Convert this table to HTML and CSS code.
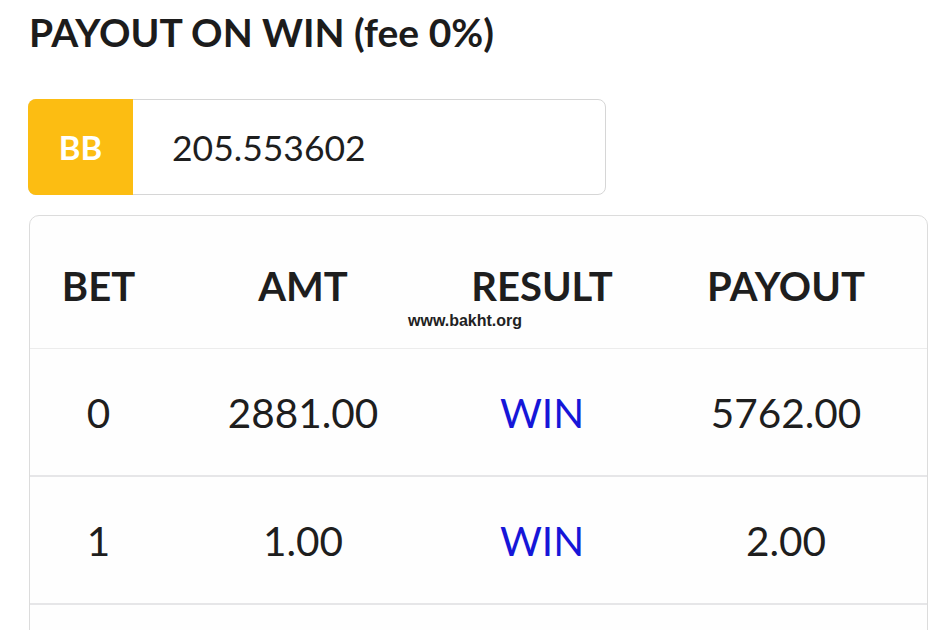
FILE: index.html
```html
<!DOCTYPE html>
<html>
<head>
<meta charset="utf-8">
<link rel="stylesheet" href="styles.css">
</head>
<body>
<div class="page">
  <h1 class="title">PAYOUT ON WIN (fee 0%)</h1>
  <div class="input-group">
    <div class="addon">BB</div>
    <div class="value">205.553602</div>
  </div>
  <div class="card">
    <div class="row head">
      <div class="cell">BET</div>
      <div class="cell">AMT</div>
      <div class="cell">RESULT</div>
      <div class="cell">PAYOUT</div>
      <div class="watermark">www.bakht.org</div>
    </div>
    <div class="row">
      <div class="cell">0</div>
      <div class="cell">2881.00</div>
      <div class="cell win">WIN</div>
      <div class="cell">5762.00</div>
    </div>
    <div class="row">
      <div class="cell">1</div>
      <div class="cell">1.00</div>
      <div class="cell win">WIN</div>
      <div class="cell">2.00</div>
    </div>
    <div class="row">
      <div class="cell"></div>
      <div class="cell"></div>
      <div class="cell"></div>
      <div class="cell"></div>
    </div>
  </div>
</div>
</body>
</html>
```
FILE: styles.css
```css
html, body {
  margin: 0;
  padding: 0;
  background: #ffffff;
  font-family: Lato, "Open Sans", sans-serif;
  color: #1e1e1e;
  overflow: hidden;
}
.page {
  padding: 10px 0 0 28px;
  width: 901px;
}
.title {
  margin: 0 0 0 1px;
  font-size: 39px;
  font-weight: 700;
  line-height: 44px;
  color: #1c1c1c;
}
.input-group {
  margin-top: 45px;
  width: 578px;
  height: 96px;
  display: flex;
  box-sizing: border-box;
  border: 1px solid #d6d6d6;
  border-radius: 8px;
  background: #fff;
}
.addon {
  width: 105px;
  margin: -1px 0 -1px -1px;
  background: #fcbd12;
  color: #fff;
  border-radius: 8px 0 0 8px;
  display: flex;
  align-items: center;
  justify-content: center;
  font-size: 33px;
  font-weight: 700;
}
.value {
  display: flex;
  align-items: center;
  padding-left: 39px;
  font-size: 35.5px;
  color: #1e1e1e;
}
.card {
  margin-top: 20px;
  margin-left: 1px;
  width: 899px;
  box-sizing: border-box;
  border: 1px solid #dcdcdc;
  border-radius: 10px 10px 0 0;
  background: #fefefe;
  height: 420px;
  overflow: hidden;
}
.row {
  display: grid;
  grid-template-columns: 137px 272px 206px 1fr;
  height: 126px;
  align-items: center;
  border-bottom: 2px solid #e6e6e8;
  font-size: 40.5px;
}
.row.head {
  position: relative;
  height: 132px;
  border-bottom: 1px solid #ececec;
  font-weight: 700;
  font-size: 40px;
}
.row.head .cell {
  margin-top: 8px;
}
.cell {
  text-align: center;
}
.win {
  color: #1616d8;
}
.watermark {
  position: absolute;
  left: 378px;
  top: 96px;
  font-family: "Liberation Sans", Arial, sans-serif;
  font-weight: 700;
  font-size: 16px;
  color: #222;
}
```
